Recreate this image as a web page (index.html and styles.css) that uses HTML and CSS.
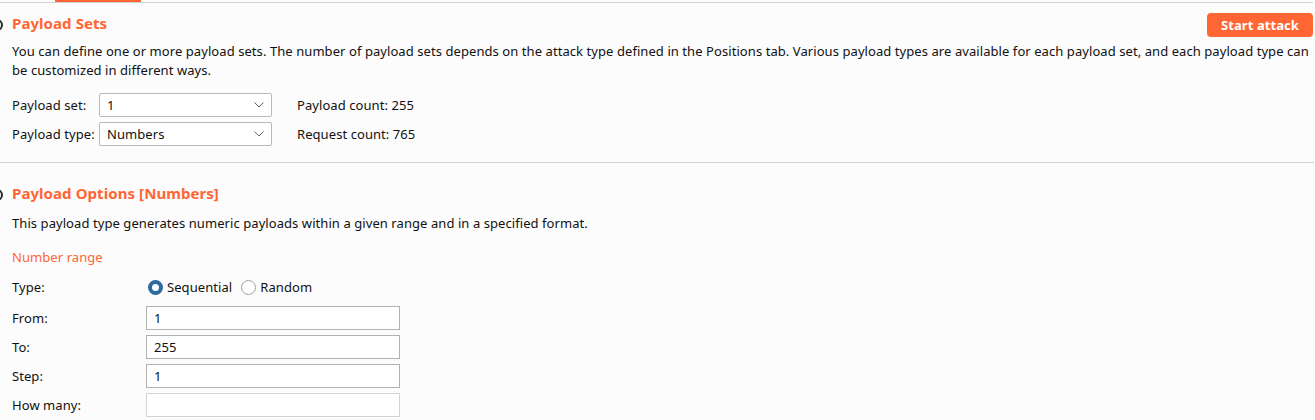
FILE: index.html
```html
<!DOCTYPE html>
<html>
<head>
<meta charset="utf-8">
<link rel="stylesheet" href="styles.css">
</head>
<body>
<div class="topbar"><div class="tab-indicator"></div></div>

<section class="panel">
  <span class="help-icon"></span>
  <div class="panel-head">
    <h2 class="panel-title">Payload Sets</h2>
    <button class="btn-start">Start attack</button>
  </div>
  <p class="desc">You can define one or more payload sets. The number of payload sets depends on the attack type defined in the Positions tab. Various payload types are available for each payload set, and each payload type can be customized in different ways.</p>
  <div class="set-grid">
    <div class="set-row">
      <span class="set-label">Payload set:</span>
      <div class="select"><span>1</span><svg class="chev" width="10" height="6" viewBox="0 0 10 6"><path d="M0.5 0.5 L5 5 L9.5 0.5" fill="none" stroke="#666" stroke-width="1"/></svg></div>
      <span class="count">Payload count: 255</span>
    </div>
    <div class="set-row">
      <span class="set-label">Payload type:</span>
      <div class="select"><span>Numbers</span><svg class="chev" width="10" height="6" viewBox="0 0 10 6"><path d="M0.5 0.5 L5 5 L9.5 0.5" fill="none" stroke="#666" stroke-width="1"/></svg></div>
      <span class="count">Request count: 765</span>
    </div>
  </div>
</section>

<div class="separator"></div>

<section class="panel panel2">
  <span class="help-icon"></span>
  <div class="panel-head">
    <h2 class="panel-title">Payload Options [Numbers]</h2>
  </div>
  <p class="desc">This payload type generates numeric payloads within a given range and in a specified format.</p>
  <div class="subhead">Number range</div>
  <div class="form">
    <div class="form-row type-row">
      <span class="form-label">Type:</span>
      <div class="radios">
        <label class="radio"><span class="dot on"></span>Sequential</label>
        <label class="radio"><span class="dot"></span>Random</label>
      </div>
    </div>
    <div class="form-row"><span class="form-label">From:</span><div class="input">1</div></div>
    <div class="form-row"><span class="form-label">To:</span><div class="input">255</div></div>
    <div class="form-row"><span class="form-label">Step:</span><div class="input">1</div></div>
    <div class="form-row"><span class="form-label">How many:</span><div class="input disabled"></div></div>
  </div>
</section>
</body>
</html>
```
FILE: styles.css
```css
* { box-sizing: border-box; }
html, body { margin: 0; padding: 0; }
body {
  background: #fcfcfc;
  font-family: "Noto Sans", "Open Sans", sans-serif;
  font-size: 13px;
  letter-spacing: 0.07px;
  color: #111;
  width: 1315px;
  height: 420px;
  overflow: hidden;
}
.topbar {
  height: 3px;
  border-bottom: 1px solid #d2d2d2;
  margin-right: 2px;
  display: flex;
}
.tab-indicator {
  margin-left: 55px;
  width: 86px;
  height: 2px;
  background: #ff6633;
}
.panel {
  position: relative;
  padding: 10px 2px 0 12px;
}
.help-icon {
  position: absolute;
  left: -9px;
  top: 16px;
  width: 12px;
  height: 12px;
  border: 2px solid #2a2a2a;
  border-radius: 50%;
}
.panel-head {
  display: flex;
  justify-content: space-between;
  align-items: flex-start;
  height: 24px;
}
.panel-title {
  margin: 0;
  font-size: 15px;
  line-height: 20px;
  font-weight: 700;
  color: #ff6633;
}
.btn-start {
  height: 24px;
  width: 106px;
  border: none;
  border-radius: 4px;
  background: #ff6633;
  color: #fff;
  font-family: inherit;
  font-size: 13px;
  letter-spacing: 0.07px;
  font-weight: 700;
  padding: 0;
}
.desc {
  margin: 5px 0 0;
  line-height: 19px;
}
.set-grid {
  margin-top: 13px;
  display: flex;
  flex-direction: column;
  gap: 5px;
}
.set-row {
  display: flex;
  align-items: center;
  height: 24px;
}
.set-label { width: 87px; }
.select {
  width: 173px;
  height: 24px;
  border: 1px solid #b9b9b9;
  border-radius: 2px;
  background: #fff;
  display: flex;
  align-items: center;
  justify-content: space-between;
  padding: 0 7px 0 7px;
}
.count { margin-left: 25px; }
.separator {
  margin-top: 16px;
  margin-right: 1px;
  height: 1px;
  background: #d2d2d2;
}
.panel2 { padding-top: 20px; }
.panel2 .help-icon { top: 26px; }
.panel2 .desc { margin-top: 7px; }
.subhead {
  margin-top: 15px;
  color: #ff6633;
  line-height: 19px;
}
.form {
  margin-top: 11px;
  display: flex;
  flex-direction: column;
  gap: 5px;
}
.form-row {
  display: flex;
  align-items: center;
  height: 24px;
}
.type-row { height: 18px; margin-bottom: 5px; }
.form-label { width: 134px; }
.radios { display: flex; gap: 9px; padding-left: 2px; }
.radio { display: flex; align-items: center; gap: 4px; }
.dot {
  width: 15px;
  height: 15px;
  border-radius: 50%;
  border: 1px solid #a0a0a0;
  background: #fff;
}
.dot.on {
  border: 4px solid #2c6aa0;
  background: #fff;
}
.input {
  width: 254px;
  height: 24px;
  border: 1px solid #b4b0b0;
  background: #fff;
  padding: 0 7px;
  display: flex;
  align-items: center;
}
.input.disabled { border-color: #d4d4d4; }
```
